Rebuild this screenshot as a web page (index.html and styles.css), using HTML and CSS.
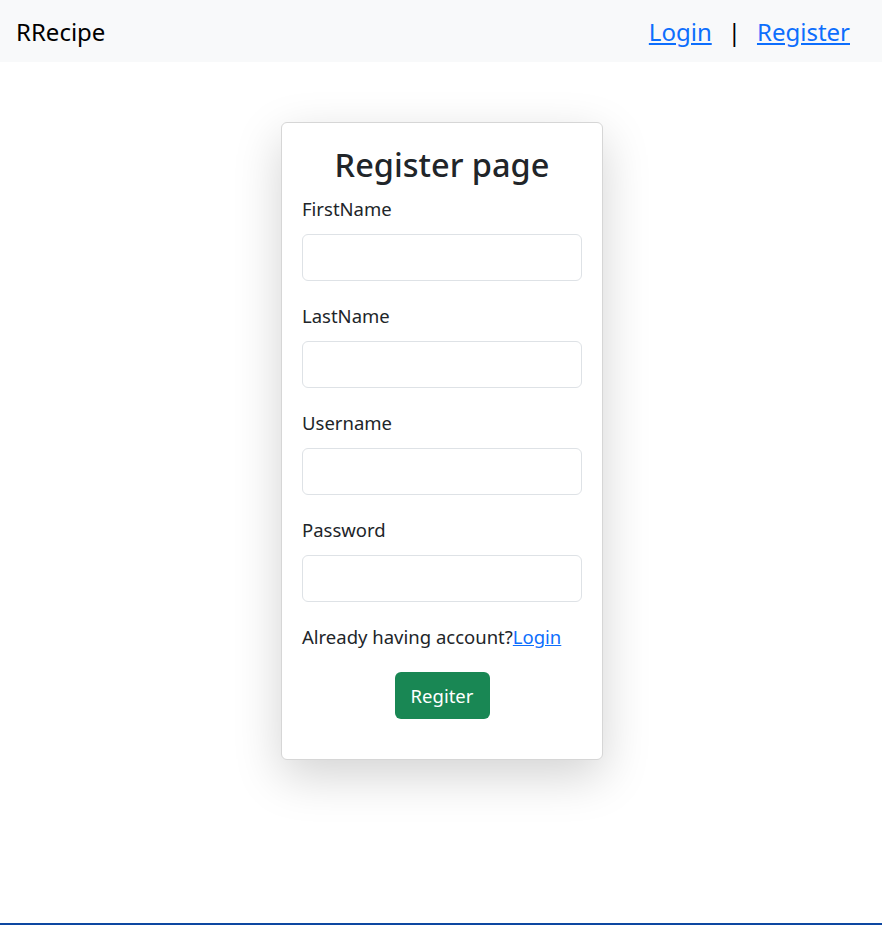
FILE: index.html
```html
<!DOCTYPE html>
<html lang="en">
<head>
<meta charset="utf-8">
<title>RRecipe - Register</title>
<link rel="stylesheet" href="styles.css">
</head>
<body>
<div class="page">
  <nav class="navbar">
    <span class="brand">RRecipe</span>
    <div class="nav-links">
      <a href="#" class="nav-link">Login</a>
      <span class="sep">|</span>
      <a href="#" class="nav-link">Register</a>
    </div>
  </nav>
  <main class="main">
    <form class="card">
      <h2 class="title">Register page</h2>
      <div class="field">
        <label class="label">FirstName</label>
        <input class="input" type="text">
      </div>
      <div class="field">
        <label class="label">LastName</label>
        <input class="input" type="text">
      </div>
      <div class="field">
        <label class="label">Username</label>
        <input class="input" type="text">
      </div>
      <div class="field">
        <label class="label">Password</label>
        <input class="input" type="password">
      </div>
      <p class="already">Already having account?<a href="#" class="link">Login</a></p>
      <div class="actions">
        <button type="button" class="btn">Regiter</button>
      </div>
    </form>
  </main>
  <footer class="footer"></footer>
</div>
</body>
</html>
```
FILE: styles.css
```css
* { box-sizing: border-box; }
html, body { margin: 0; padding: 0; }
body {
  font-family: "Noto Sans", "Open Sans", sans-serif;
  color: #212529;
  background: #fff;
}
.page {
  min-height: 100vh;
  display: flex;
  flex-direction: column;
}
.navbar {
  height: 62px;
  background: #f8f9fa;
  display: flex;
  align-items: center;
  justify-content: space-between;
  padding: 0 32px 0 16px;
}
.brand {
  font-size: 24px;
  color: #000;
}
.nav-links {
  display: flex;
  align-items: center;
  gap: 16px;
  font-size: 24px;
}
.nav-link { color: #0d6efd; text-decoration: underline; }
.sep { color: #000; }
.main {
  flex: 1;
  display: flex;
  justify-content: center;
  align-items: flex-start;
  padding-top: 60px;
}
.card {
  width: 322px;
  margin-left: 2px;
  border: 1px solid #d6d6d6;
  border-radius: 6px;
  background: #fff;
  padding: 20px 20px 40px;
  box-shadow: 0 16px 48px rgba(0,0,0,0.175);
}
.title {
  margin: 0 0 7px;
  text-align: center;
  font-size: 32.5px;
  font-weight: 500;
  line-height: 44px;
}
.field { margin-bottom: 20px; }
.label {
  display: block;
  font-size: 18.5px;
  line-height: 30px;
  margin-bottom: 10px;
}
.input {
  display: block;
  width: 100%;
  height: 47px;
  border: 1px solid #dee2e6;
  border-radius: 6px;
  font-size: 18px;
  padding: 6px 12px;
}
.already {
  margin: 0 0 20px;
  font-size: 18.5px;
  line-height: 30px;
}
.link { color: #0d6efd; }
.actions { display: flex; justify-content: center; }
.btn {
  background: #198754;
  color: #fff;
  border: none;
  border-radius: 6px;
  font-family: inherit;
  font-size: 18.5px;
  width: 95px;
  height: 47px;
}
.footer {
  height: 2px;
  background: #0d47a1;
}
```
